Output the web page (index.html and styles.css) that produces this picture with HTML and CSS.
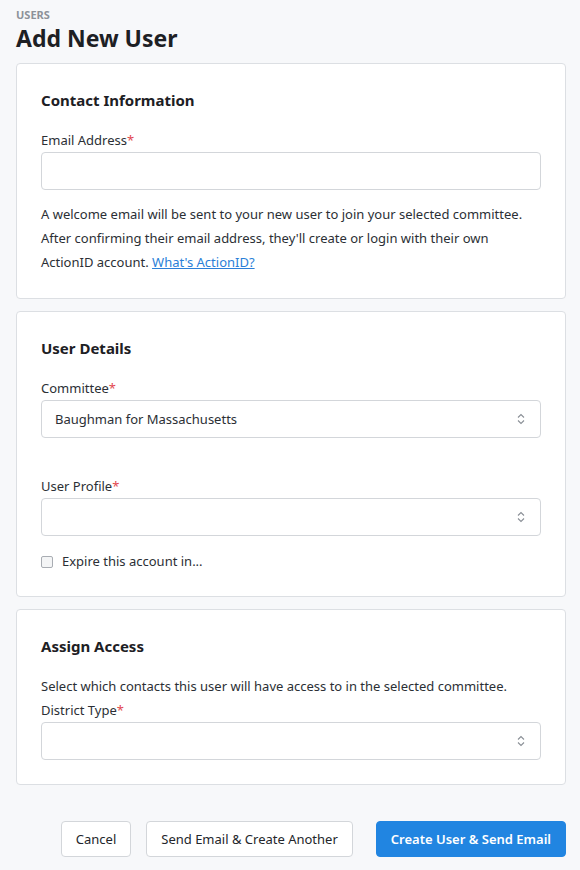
FILE: index.html
```html
<!DOCTYPE html>
<html>
<head>
<meta charset="utf-8">
<link rel="stylesheet" href="styles.css">
</head>
<body>
<div class="page">
  <div class="eyebrow">USERS</div>
  <h1 class="title">Add New User</h1>

  <section class="card">
    <h2 class="card-title">Contact Information</h2>
    <label class="label">Email Address<span class="req">*</span></label>
    <div class="input"></div>
    <p class="help">A welcome email will be sent to your new user to join your selected committee. After confirming their email address, they'll create or login with their own ActionID account. <a class="link" href="#">What's ActionID?</a></p>
  </section>

  <section class="card">
    <h2 class="card-title">User Details</h2>
    <label class="label">Committee<span class="req">*</span></label>
    <div class="input select"><span class="value">Baughman for Massachusetts</span>
      <svg class="chev" width="8" height="12" viewBox="0 0 8 12"><path d="M1 4.5 L4 1.5 L7 4.5 M1 7.5 L4 10.5 L7 7.5" fill="none" stroke="#8a8f96" stroke-width="1.1"/></svg>
    </div>
    <label class="label label-spaced">User Profile<span class="req">*</span></label>
    <div class="input select"><span class="value"></span>
      <svg class="chev" width="8" height="12" viewBox="0 0 8 12"><path d="M1 4.5 L4 1.5 L7 4.5 M1 7.5 L4 10.5 L7 7.5" fill="none" stroke="#8a8f96" stroke-width="1.1"/></svg>
    </div>
    <div class="check-row"><span class="checkbox"></span><span>Expire this account in...</span></div>
  </section>

  <section class="card">
    <h2 class="card-title">Assign Access</h2>
    <p class="help help-tight">Select which contacts this user will have access to in the selected committee.</p>
    <label class="label label-after-help">District Type<span class="req">*</span></label>
    <div class="input select"><span class="value"></span>
      <svg class="chev" width="8" height="12" viewBox="0 0 8 12"><path d="M1 4.5 L4 1.5 L7 4.5 M1 7.5 L4 10.5 L7 7.5" fill="none" stroke="#8a8f96" stroke-width="1.1"/></svg>
    </div>
  </section>

  <div class="actions">
    <button class="btn">Cancel</button>
    <button class="btn">Send Email &amp; Create Another</button>
    <button class="btn btn-primary">Create User &amp; Send Email</button>
  </div>
</div>
</body>
</html>
```
FILE: styles.css
```css
* { box-sizing: border-box; }
html, body { margin: 0; padding: 0; background: #f7f8fa; }
body {
  font-family: "Noto Sans", "Open Sans", sans-serif;
  color: #23262b;
  font-size: 13px;
}
.page { padding: 7px 14px 0 16px; }
.eyebrow {
  font-size: 11px;
  font-weight: 700;
  color: #8d9299;
  line-height: 16px;
}
.title {
  margin: 0 0 10px 0;
  font-size: 23px;
  line-height: 30px;
  font-weight: 700;
  color: #1d2024;
}
.card {
  background: #fff;
  border: 1px solid #dcdfe3;
  border-radius: 4px;
  padding: 26px 24px 24px 24px;
  margin-bottom: 12px;
  display: flex;
  flex-direction: column;
}
.card-title {
  margin: 0 0 20px 0;
  font-size: 15px;
  line-height: 20px;
  font-weight: 700;
  color: #1d2024;
}
.label {
  display: block;
  line-height: 20px;
  margin-bottom: 2px;
  color: #2b2f35;
}
.label-spaced { margin-top: 38px; }
.label-after-help { margin-top: 4px; }
.req { color: #e2474f; }
.input {
  height: 38px;
  border: 1px solid #d3d6da;
  border-radius: 4px;
  background: #fff;
}
.select {
  display: flex;
  align-items: center;
  justify-content: space-between;
  padding: 0 15px 0 13px;
}
.value { color: #2b2f35; }
.chev { display: block; }
.help {
  margin: 12px 0 0 0;
  line-height: 24px;
  color: #2b2f35;
}
.help-tight { margin: 0; line-height: 20px; }
.link { color: #2b7fd8; text-decoration: underline; }
.check-row {
  display: flex;
  align-items: center;
  gap: 9px;
  margin-top: 15px;
  line-height: 21px;
  color: #2b2f35;
}
.checkbox {
  width: 12px;
  height: 12px;
  border: 1px solid #a9adb3;
  border-radius: 2px;
  background: #f4f5f6;
}
.actions {
  display: flex;
  justify-content: flex-end;
  gap: 15px;
  margin-top: 36px;
}
.btn {
  font-family: inherit;
  font-size: 13px;
  height: 36px;
  padding: 0 14px;
  border: 1px solid #d3d6da;
  border-radius: 4px;
  background: #fff;
  color: #23262b;
}
.btn-primary {
  margin-left: 8px;
  background: #2185e1;
  border-color: #2185e1;
  color: #fff;
  font-weight: 600;
}
```
